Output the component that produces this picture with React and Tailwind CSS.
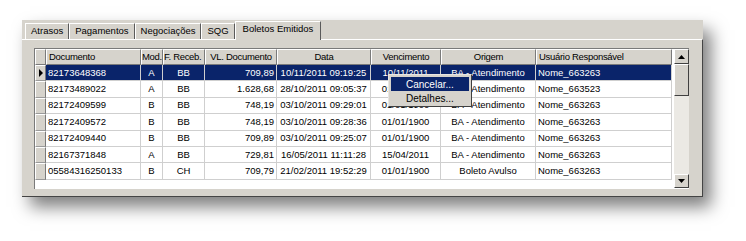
import React from 'react';

const cols = [
  { w: 'w-[95px]', head: 'Documento', hAlign: 'justify-start pl-[2px]', cAlign: 'justify-start pl-[2px]' },
  { w: 'w-[22px]', head: 'Mod.', hAlign: 'justify-start', cAlign: 'justify-center' },
  { w: 'w-[42px]', head: 'F. Receb.', hAlign: 'justify-start', cAlign: 'justify-center' },
  { w: 'w-[72px]', head: 'VL. Documento', hAlign: 'justify-center', cAlign: 'justify-end pr-[2px]' },
  { w: 'w-[94px]', head: 'Data', hAlign: 'justify-center', cAlign: 'justify-center' },
  { w: 'w-[70px]', head: 'Vencimento', hAlign: 'justify-center', cAlign: 'justify-center' },
  { w: 'w-[95px]', head: 'Origem', hAlign: 'justify-center', cAlign: 'justify-center' },
  { w: 'w-[136px]', head: 'Usuário Responsável', hAlign: 'justify-start pl-[2px]', cAlign: 'justify-start pl-[2px]' },
];

const rows = [
  ['82173648368', 'A', 'BB', '709,89', '10/11/2011 09:19:25', '10/11/2011', 'BA - Atendimento', 'Nome_663263'],
  ['82173489022', 'A', 'BB', '1.628,68', '28/10/2011 09:05:37', '01/01/1900', 'BA - Atendimento', 'Nome_663523'],
  ['82172409599', 'B', 'BB', '748,19', '03/10/2011 09:29:01', '01/01/1900', 'BA - Atendimento', 'Nome_663263'],
  ['82172409572', 'B', 'BB', '748,19', '03/10/2011 09:28:36', '01/01/1900', 'BA - Atendimento', 'Nome_663263'],
  ['82172409440', 'B', 'BB', '709,89', '03/10/2011 09:25:07', '01/01/1900', 'BA - Atendimento', 'Nome_663263'],
  ['82167371848', 'A', 'BB', '729,81', '16/05/2011 11:11:28', '15/04/2011', 'BA - Atendimento', 'Nome_663263'],
  ['05584316250133', 'B', 'CH', '709,79', '21/02/2011 19:52:29', '01/01/1900', 'Boleto Avulso', 'Nome_663263'],
];

const tabs = ['Atrasos', 'Pagamentos', 'Negociações', 'SQG'];

const Arrow = ({ down }) => (
  <svg width="7" height="4" viewBox="0 0 7 4">
    <path d={down ? 'M0 0h7L3.5 4z' : 'M3.5 0L7 4H0z'} fill="#000" />
  </svg>
);

export default function App() {
  return (
    <div
      className="relative w-[746px] h-[241px] bg-white pt-[20px] pl-[22px] text-[9.5px] text-black overflow-hidden"
      style={{ fontFamily: '"Liberation Sans", Arial, sans-serif' }}
    >
      {/* Window panel */}
      <div className="w-[681px] h-[177px] bg-[#d6d3cc] flex flex-col pt-[1px] shadow-[8px_10px_16px_rgba(0,0,0,0.5)]">
        {/* Tabs */}
        <div className="h-[18px] flex items-end pl-[3px] relative z-10">
          {tabs.map((t) => (
            <div
              key={t}
              className="h-[16px] px-[5px] flex items-center border-t border-l border-t-white border-l-white border-r border-r-[#5a5a5a]"
            >
              {t}
            </div>
          ))}
          <div className="h-[19px] mb-[-1px] px-[7px] flex items-center pb-[3px] bg-[#d6d3cc] border-t border-l border-white border-r border-r-[#5a5a5a]">
            Boletos Emitidos
          </div>
        </div>

        {/* Page */}
        <div className="flex-1 border-t border-t-white border-r border-r-[#444] border-b border-b-[#444] pt-[8px] pl-[12px]">
          {/* Grid */}
          <div className="w-[655px] h-[141px] bg-white border-l border-t border-[#7a7a7a] flex">
            <div className="w-[637px] flex flex-col">
              {/* header */}
              <div className="h-[16px] flex tracking-[-0.3px]">
                <div className="w-[11px] bg-[#d6d3cc] border-t border-l border-white border-r border-r-[#7a7a7a] border-b border-b-[#7a7a7a]" />
                {cols.map((c) => (
                  <div
                    key={c.head}
                    className={`${c.w} ${c.hAlign} flex items-center bg-[#d6d3cc] border-t border-l border-white border-r border-r-[#7a7a7a] border-b border-b-[#7a7a7a] whitespace-nowrap overflow-hidden`}
                  >
                    {c.head}
                  </div>
                ))}
              </div>
              {rows.map((r, i) => {
                const sel = i === 0;
                return (
                  <div key={i} className="h-[16.4px] flex">
                    <div className="w-[11px] bg-[#d6d3cc] border-t border-l border-white border-r border-r-[#7a7a7a] border-b border-b-[#9a9a9a] flex items-center justify-center">
                      {sel && (
                        <svg width="4" height="8" viewBox="0 0 4 8">
                          <path d="M0 0L4 4L0 8z" fill="#000" />
                        </svg>
                      )}
                    </div>
                    {r.map((v, j) => (
                      <div
                        key={j}
                        className={`${cols[j].w} ${cols[j].cAlign} flex items-center whitespace-nowrap overflow-hidden border-r border-b border-[#cfcfcf] ${
                          sel ? 'bg-[#0a246a] text-white' : 'bg-white'
                        }`}
                      >
                        {v}
                      </div>
                    ))}
                  </div>
                );
              })}
            </div>

            {/* Scrollbar */}
            <div className="ml-[2px] w-[15px] h-[139px] flex flex-col bg-[#ebe9e4]">
              <div className="h-[15px] bg-[#d6d3cc] border-t border-l border-white border-r border-b border-r-[#404040] border-b-[#404040] flex items-center justify-center">
                <Arrow />
              </div>
              <div className="h-[32px] bg-[#d6d3cc] border-t border-l border-white border-r border-b border-r-[#404040] border-b-[#404040]" />
              <div className="flex-1" />
              <div className="h-[14px] bg-[#d6d3cc] border-t border-l border-white border-r border-b border-r-[#404040] border-b-[#404040] flex items-center justify-center">
                <Arrow down />
              </div>
            </div>
          </div>
        </div>
      </div>

      {/* Context menu */}
      <div className="absolute left-[388px] top-[74px] w-[84px] h-[33px] bg-[#d6d3cc] border border-t-[#e8e6e2] border-l-[#e8e6e2] border-r-[#404040] border-b-[#404040] p-[2px] flex flex-col text-[10px]">
        <div className="h-[14px] bg-[#0a246a] text-white flex items-center pl-[15px]">Cancelar...</div>
        <div className="h-[14px] flex items-center pl-[15px]">Detalhes...</div>
      </div>
    </div>
  );
}
